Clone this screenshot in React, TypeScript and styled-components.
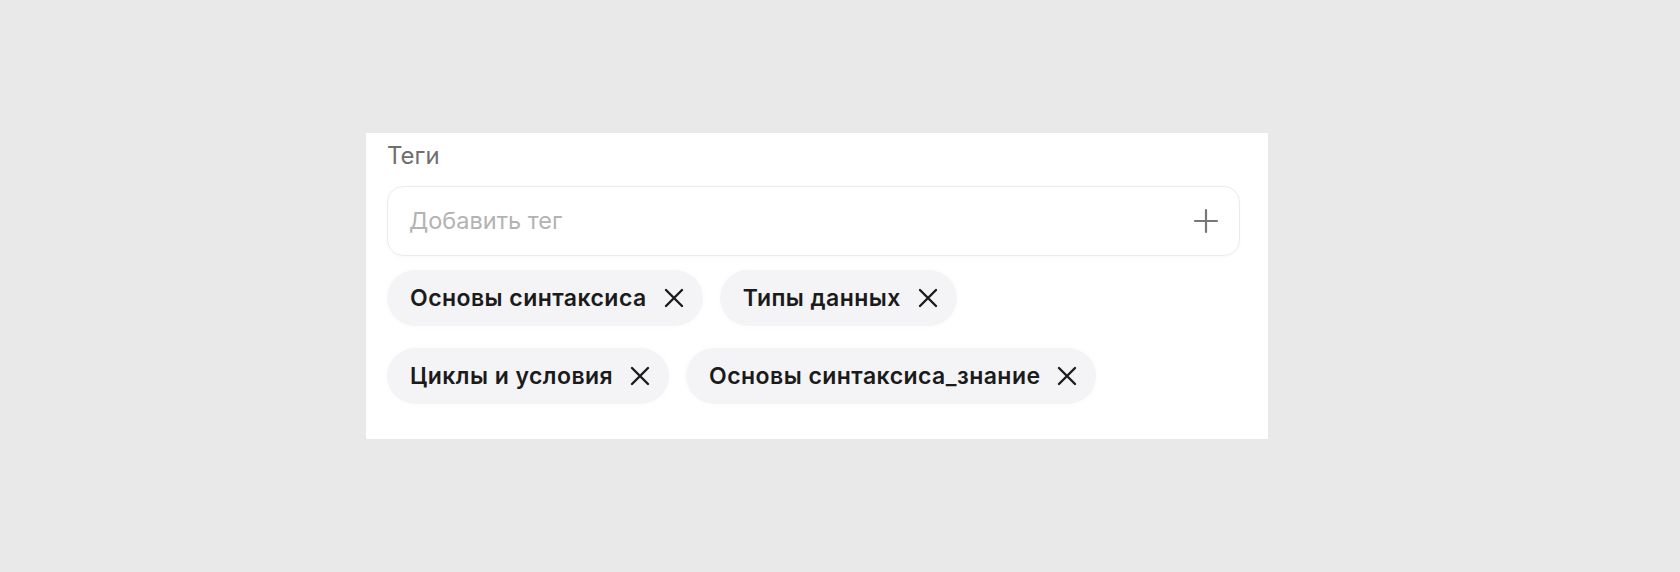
import React from "react";
import styled, { createGlobalStyle } from "styled-components";

const Global = createGlobalStyle`
  html, body { margin: 0; padding: 0; background: #e9e9e9; }
  body { font-family: Inter, "Noto Sans", Roboto, sans-serif; -webkit-font-smoothing: antialiased; }
`;

const Page = styled.div`
  width: 1680px;
  height: 572px;
  padding: 133px 0 0 366px;
  box-sizing: border-box;
`;

const Panel = styled.section`
  width: 902px;
  height: 306px;
  box-sizing: border-box;
  background: #fff;
  padding: 8px 28px 0 21px;
  display: flex;
  flex-direction: column;
`;

const Label = styled.div`
  font-size: 24px;
  line-height: 30px;
  color: #6f6f6f;
  font-weight: 400;
`;

const InputBox = styled.div`
  margin-top: 15px;
  height: 70px;
  box-sizing: border-box;
  border: 1.5px solid #ebebeb;
  border-radius: 16px;
  display: flex;
  align-items: center;
  padding: 0 20px 0 21px;
  box-shadow: 0 1px 3px rgba(0,0,0,0.03);
`;

const Placeholder = styled.span`
  flex: 1;
  font-size: 23.5px;
  color: #b3b3b3;
  margin-top: -2px;
`;

const Chips = styled.div`
  margin-top: 14px;
  display: flex;
  flex-wrap: wrap;
  gap: 22px 17px;
  width: 740px;
`;

const Chip = styled.div`
  height: 56px;
  box-sizing: border-box;
  border-radius: 28px;
  background: #f4f4f6;
  box-shadow: 0 0 8px rgba(0,0,0,0.025);
  display: flex;
  align-items: center;
  gap: 16px;
  padding: 0 18px 0 23px;
  font-size: 23px;
  letter-spacing: 0.45px;
  font-weight: 600;
  color: #1b1b1b;
`;

const Close = styled.svg`
  width: 22px;
  height: 22px;
  flex: none;
`;

const Plus = styled.svg`
  width: 26px;
  height: 26px;
`;

const tags = ["Основы синтаксиса", "Типы данных", "Циклы и условия", "Основы синтаксиса_знание"];

export default function App() {
  return (
    <Page>
      <Global />
      <Panel>
        <Label>Теги</Label>
        <InputBox>
          <Placeholder>Добавить тег</Placeholder>
          <Plus viewBox="0 0 26 26">
            <path d="M13 2v22M2 13h22" stroke="#777" strokeWidth="2.2" strokeLinecap="round" />
          </Plus>
        </InputBox>
        <Chips>
          {tags.map((t) => (
            <Chip key={t}>
              {t}
              <Close viewBox="0 0 22 22">
                <path d="M3 3l16 16M19 3L3 19" stroke="#1b1b1b" strokeWidth="2.4" strokeLinecap="round" />
              </Close>
            </Chip>
          ))}
        </Chips>
      </Panel>
    </Page>
  );
}
